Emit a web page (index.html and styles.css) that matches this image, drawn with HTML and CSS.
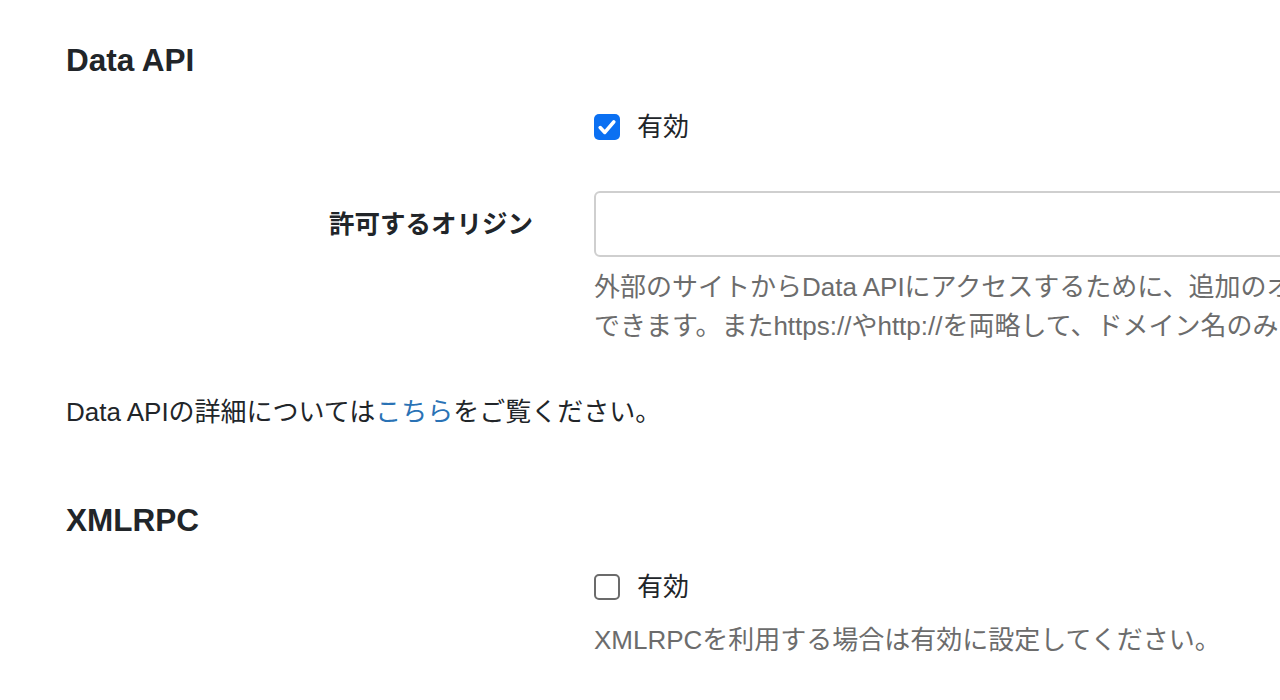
FILE: index.html
```html
<!DOCTYPE html>
<html lang="ja">
<head>
<meta charset="utf-8">
<title>Web サービス設定</title>
<link rel="stylesheet" href="styles.css">
</head>
<body>
<div class="page">
  <section class="section">
    <h2 class="section-title">Data API</h2>
    <div class="form-row row-check">
      <div class="label-col"></div>
      <div class="control-col">
        <label class="check">
          <span class="box box-checked">
            <svg width="26" height="26" viewBox="0 0 26 26"><path d="M6.2 13.6 L10.8 18.4 L19.8 7.8" fill="none" stroke="#fff" stroke-width="3.6" stroke-linecap="round" stroke-linejoin="round"/></svg>
          </span>
          <span class="check-text">有効</span>
        </label>
      </div>
    </div>
    <div class="form-row row-input">
      <div class="label-col"><span class="field-label">許可するオリジン</span></div>
      <div class="control-col">
        <div class="text-input"></div>
        <p class="hint"><span class="line">外部のサイトからData APIにアクセスするために、追加のオリジンを設定することが</span><span class="line">できます。またhttps://やhttp://を両略して、ドメイン名のみを指定することもできます。</span></p>
      </div>
    </div>
    <p class="note">Data APIの詳細については<a class="link" href="#">こちら</a>をご覧ください。</p>
  </section>
  <section class="section section-xmlrpc">
    <h2 class="section-title">XMLRPC</h2>
    <div class="form-row row-check">
      <div class="label-col"></div>
      <div class="control-col">
        <label class="check">
          <span class="box"></span>
          <span class="check-text">有効</span>
        </label>
        <p class="hint hint-single">XMLRPCを利用する場合は有効に設定してください。</p>
      </div>
    </div>
  </section>
</div>
</body>
</html>
```
FILE: styles.css
```css
html, body {
  margin: 0;
  padding: 0;
  background: #fff;
  overflow: hidden;
}
body {
  font-family: "Liberation Sans", "Noto Sans CJK JP", sans-serif;
  font-size: 26px;
  color: #212529;
  width: 1280px;
  height: 700px;
}
.page {
  padding: 42px 0 0 66px;
}
.section-title {
  margin: 0;
  font-size: 31.5px;
  line-height: 37px;
  font-weight: 700;
}
.form-row {
  display: grid;
  grid-template-columns: 467px 1000px;
  column-gap: 61px;
}
.row-check {
  margin-top: 28px;
}
.row-input {
  margin-top: 44px;
}
.label-col {
  text-align: right;
}
.field-label {
  display: block;
  font-weight: 700;
  font-size: 25.5px;
  line-height: 66px;
}
.check {
  display: flex;
  align-items: center;
  gap: 17px;
  height: 40px;
}
.box {
  display: block;
  box-sizing: border-box;
  width: 26px;
  height: 26px;
  border: 2px solid #6b6b6b;
  border-radius: 5px;
  background: #fff;
}
.box-checked {
  border: none;
  background: #0b70f2;
}
.box svg {
  display: block;
}
.check-text {
  line-height: 40px;
}
.text-input {
  box-sizing: border-box;
  height: 66px;
  width: 1000px;
  border: 2px solid #cfcfcf;
  border-radius: 6px;
  background: #fff;
}
.hint {
  margin: 11px 0 0;
  color: #6c6c6c;
  line-height: 39px;
}
.hint .line {
  display: block;
  white-space: nowrap;
}
.hint-single {
  margin-top: 14px;
  white-space: nowrap;
}
.note {
  margin: 47px 0 0;
  line-height: 39px;
}
.link {
  color: #2a72b5;
  text-decoration: none;
}
.section-xmlrpc {
  margin-top: 70px;
}
```
